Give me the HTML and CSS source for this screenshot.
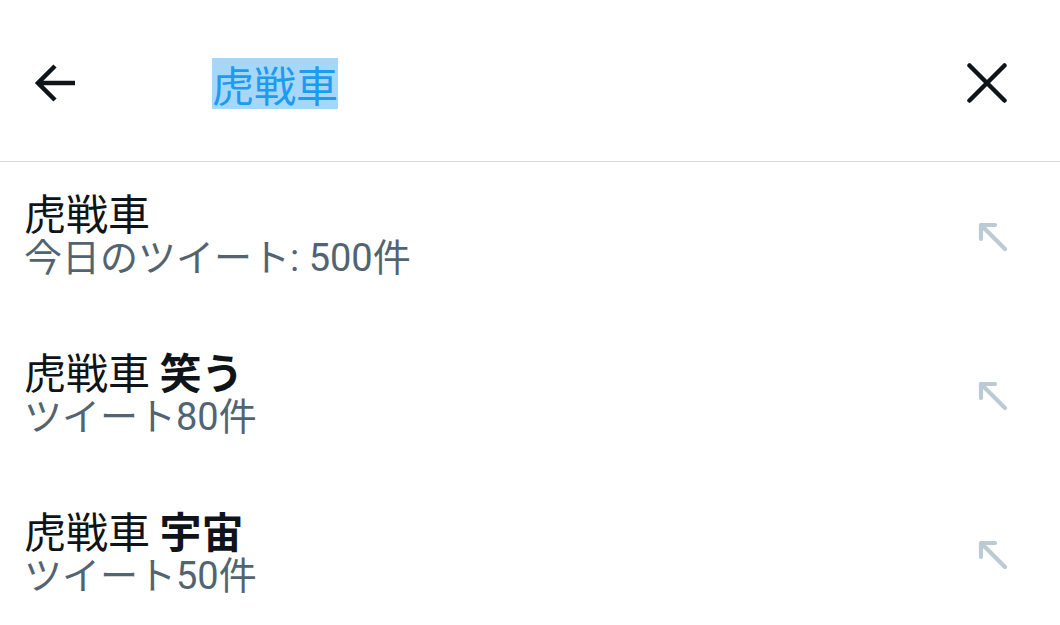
FILE: index.html
```html
<!DOCTYPE html>
<html lang="ja">
<head>
<meta charset="utf-8">
<link rel="stylesheet" href="styles.css">
</head>
<body>
<div class="app">
  <header class="search-bar">
    <button class="icon-btn back" aria-label="戻る">
      <svg viewBox="0 0 42 42" width="42" height="42"><path d="M41 21H5M21 4L4 21L21 38" fill="none" stroke="#0f1419" stroke-width="4.5" stroke-linecap="butt" stroke-linejoin="miter"/></svg>
    </button>
    <div class="query"><span class="selected">虎戦車</span></div>
    <button class="icon-btn close" aria-label="クリア">
      <svg viewBox="0 0 40 40" width="40" height="40"><path d="M2.5 2.5L37.5 37.5M37.5 2.5L2.5 37.5" fill="none" stroke="#0f1419" stroke-width="4.5" stroke-linecap="round"/></svg>
    </button>
  </header>
  <ul class="suggestions">
    <li class="item">
      <div class="texts">
        <div class="title">虎戦車</div>
        <div class="meta">今日のツイート: 500件</div>
      </div>
      <svg class="fill-arrow" viewBox="0 0 30 30" width="30" height="30"><path d="M3 17V3H17M3 3L27 27" fill="none" stroke="#bccad3" stroke-width="4.2" stroke-linecap="round" stroke-linejoin="round"/></svg>
    </li>
    <li class="item">
      <div class="texts">
        <div class="title">虎戦車 <b>笑う</b></div>
        <div class="meta">ツイート80件</div>
      </div>
      <svg class="fill-arrow" viewBox="0 0 30 30" width="30" height="30"><path d="M3 17V3H17M3 3L27 27" fill="none" stroke="#bccad3" stroke-width="4.2" stroke-linecap="round" stroke-linejoin="round"/></svg>
    </li>
    <li class="item">
      <div class="texts">
        <div class="title">虎戦車 <b>宇宙</b></div>
        <div class="meta">ツイート50件</div>
      </div>
      <svg class="fill-arrow" viewBox="0 0 30 30" width="30" height="30"><path d="M3 17V3H17M3 3L27 27" fill="none" stroke="#bccad3" stroke-width="4.2" stroke-linecap="round" stroke-linejoin="round"/></svg>
    </li>
  </ul>
</div>
</body>
</html>
```
FILE: styles.css
```css
* { box-sizing: border-box; }
html, body {
  margin: 0;
  padding: 0;
  background: #ffffff;
  font-family: "Noto Sans CJK JP", "Noto Sans", sans-serif;
  color: #0f1419;
}
.app {
  width: 1060px;
  height: 625px;
  overflow: hidden;
}
.search-bar {
  height: 162px;
  border-bottom: 1px solid #d6dadc;
  display: flex;
  align-items: center;
  padding: 0 52px 0 34px;
}
.icon-btn {
  border: 0;
  background: none;
  padding: 0;
  margin: 0;
  display: flex;
  cursor: pointer;
}
.back { margin-top: 4px; }
.close { margin-top: 4px; margin-right: 1px; }
.query {
  flex: 1;
  padding-left: 136px;
  font-size: 42px;
  line-height: 51px;
  color: #1d9bf0;
  margin-top: 5px;
}
.selected {
  background: #a6d7f8;
  display: inline-block;
  height: 51px;
}
.suggestions {
  list-style: none;
  margin: 0;
  padding: 0;
}
.item {
  height: 159px;
  display: flex;
  align-items: center;
  padding: 0 52px 0 24px;
}
.texts {
  flex: 1;
  margin-top: -17px;
}
.title {
  font-size: 42px;
  line-height: 49px;
  color: #0f1419;
}
.title b { font-weight: 700; }
.meta {
  font-family: "Roboto", "Noto Sans CJK JP", sans-serif;
  font-size: 38px;
  line-height: 44px;
  color: #536471;
}
.fill-arrow {
  display: block;
  margin-top: -10px;
}
```
